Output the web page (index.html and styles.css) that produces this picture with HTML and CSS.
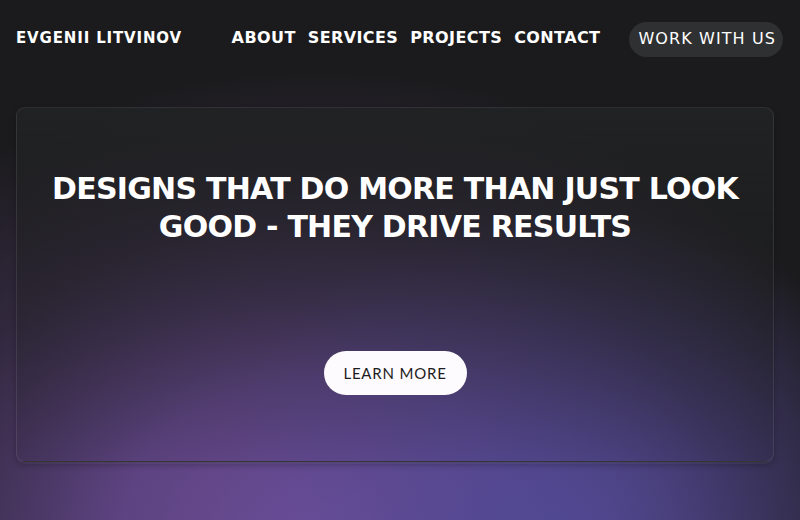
FILE: index.html
```html
<!DOCTYPE html>
<html lang="en">
<head>
<meta charset="utf-8">
<title>Evgenii Litvinov</title>
<link rel="stylesheet" href="styles.css">
</head>
<body>
<div class="page">
  <header class="header">
    <a class="logo" href="#">EVGENII LITVINOV</a>
    <nav class="nav">
      <a href="#">ABOUT</a>
      <a href="#">SERVICES</a>
      <a href="#">PROJECTS</a>
      <a href="#">CONTACT</a>
    </nav>
    <a class="cta" href="#">WORK WITH US</a>
  </header>
  <section class="hero">
    <h1 class="headline">DESIGNS THAT DO MORE THAN JUST LOOK<br>GOOD - THEY DRIVE RESULTS</h1>
    <a class="learn" href="#">LEARN MORE</a>
  </section>
</div>
</body>
</html>
```
FILE: styles.css
```css
html, body {
  margin: 0;
  padding: 0;
  height: 100%;
}
body {
  background-color: #1b1b1d;
  background-image:
    radial-gradient(ellipse 360px 340px at 70% 104%, rgba(80, 74, 152, 0.9) 0%, rgba(80, 74, 152, 0) 100%),
    radial-gradient(ellipse 580px 470px at 40% 104%, rgba(112, 78, 152, 1) 0%, rgba(104, 74, 146, 0.85) 35%, rgba(84, 60, 112, 0.4) 70%, rgba(60, 44, 80, 0) 100%);
  font-family: "DejaVu Sans", sans-serif;
  color: #fff;
  overflow: hidden;
}
a {
  color: inherit;
  text-decoration: none;
}
.page {
  padding: 0 17px 0 16px;
}
.header {
  display: flex;
  align-items: center;
  gap: 29px;
  height: 76px;
}
.logo {
  margin-right: auto;
  font-weight: 700;
  font-size: 15px;
  letter-spacing: 0.85px;
  margin-top: -1px;
}
.nav {
  display: flex;
  gap: 12px;
  font-weight: 700;
  font-size: 16px;
  letter-spacing: 0.4px;
  margin-top: -1px;
}
.cta {
  background: #2f3032;
  border-radius: 18px;
  padding: 7px 7px 9px 9px;
  font-size: 16px;
  letter-spacing: 1.1px;
  line-height: 19px;
  margin-top: 3px;
}
.hero {
  margin: 31px 9px 0 0;
  border: 1px solid rgba(255, 255, 255, 0.09);
  border-radius: 9px;
  background: linear-gradient(180deg, rgba(33, 34, 35, 1) 0%, rgba(33, 34, 35, 0.6) 30%, rgba(30, 28, 35, 0.05) 100%);
  box-shadow: 0 2px 0 rgba(255, 255, 255, 0.05), 0 3px 6px rgba(0, 0, 0, 0.25);
  padding: 62px 0 66px;
  display: flex;
  flex-direction: column;
  align-items: center;
}
.headline {
  margin: 0;
  font-size: 30px;
  line-height: 38px;
  font-weight: 700;
  text-align: center;
  letter-spacing: -0.75px;
}
.learn {
  margin-top: 105px;
  background: #fdfbfd;
  color: #1c1b20;
  border-radius: 22px;
  height: 44px;
  width: 143px;
  display: flex;
  align-items: center;
  justify-content: center;
  font-family: "Lato", sans-serif;
  font-size: 15px;
  letter-spacing: 0.8px;
}
```
